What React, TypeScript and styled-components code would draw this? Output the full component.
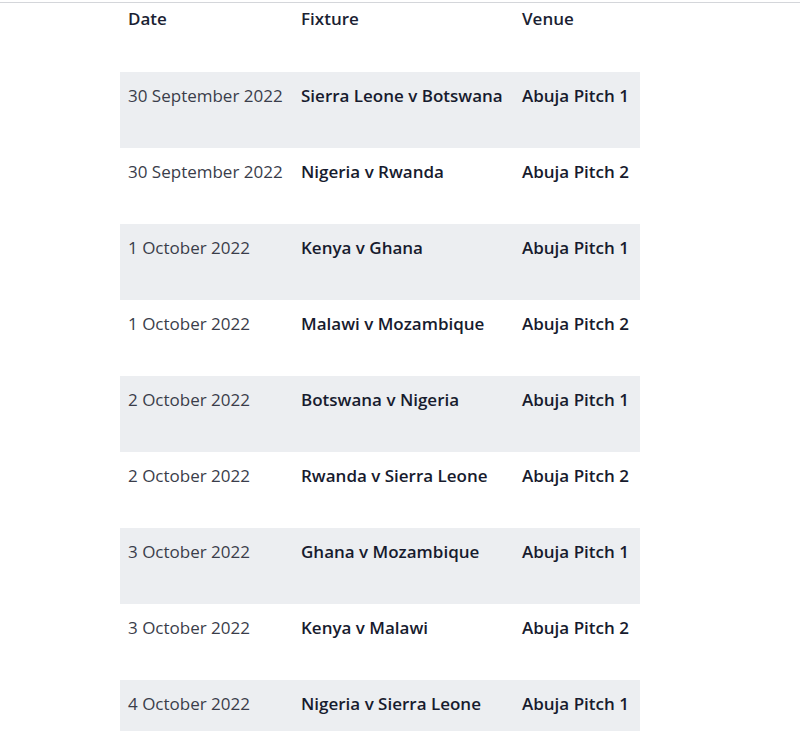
import React, { FC } from 'react'
import styled, { createGlobalStyle } from 'styled-components'

const fixtures = [
  { date: '30 September 2022', fixture: 'Sierra Leone v Botswana', venue: 'Abuja Pitch 1' },
  { date: '30 September 2022', fixture: 'Nigeria v Rwanda', venue: 'Abuja Pitch 2' },
  { date: '1 October 2022', fixture: 'Kenya v Ghana', venue: 'Abuja Pitch 1' },
  { date: '1 October 2022', fixture: 'Malawi v Mozambique', venue: 'Abuja Pitch 2' },
  { date: '2 October 2022', fixture: 'Botswana v Nigeria', venue: 'Abuja Pitch 1' },
  { date: '2 October 2022', fixture: 'Rwanda v Sierra Leone', venue: 'Abuja Pitch 2' },
  { date: '3 October 2022', fixture: 'Ghana v Mozambique', venue: 'Abuja Pitch 1' },
  { date: '3 October 2022', fixture: 'Kenya v Malawi', venue: 'Abuja Pitch 2' },
  { date: '4 October 2022', fixture: 'Nigeria v Sierra Leone', venue: 'Abuja Pitch 1' },
]

const App: FC = () => {
  return (
    <>
      <GlobalStyle />
      <Page>
        <TopRule />
        <Table>
          <colgroup>
            <col style={{ width: 173 }} />
            <col style={{ width: 221 }} />
            <col style={{ width: 126 }} />
          </colgroup>
          <thead>
            <tr>
              <HeadCell>Date</HeadCell>
              <HeadCell>Fixture</HeadCell>
              <HeadCell>Venue</HeadCell>
            </tr>
          </thead>
          <tbody>
            {fixtures.map((f, i) => (
              <Row key={i} $shaded={i % 2 === 0}>
                <DateCell>{f.date}</DateCell>
                <BoldCell>{f.fixture}</BoldCell>
                <BoldCell>{f.venue}</BoldCell>
              </Row>
            ))}
          </tbody>
        </Table>
      </Page>
    </>
  )
}

const GlobalStyle = createGlobalStyle`
  body {
    margin: 0;
    background: #ffffff;
    font-family: "Open Sans", "Liberation Sans", sans-serif;
    color: #1b1f33;
  }
`

const Page = styled.div`
  width: 800px;
  height: 731px;
  overflow: hidden;
  padding-top: 2px;
`

const TopRule = styled.div`
  height: 1px;
  background: #d4d6da;
`

const Table = styled.table`
  margin-left: 120px;
  width: 520px;
  border-collapse: collapse;
  border-spacing: 0;
  table-layout: fixed;
`

const HeadCell = styled.th`
  text-align: left;
  vertical-align: top;
  height: 69px;
  box-sizing: border-box;
  padding: 6px 0 0 8px;
  font-size: 17px;
  line-height: 20px;
  font-weight: 600;
  color: #1b1f33;
`

const Row = styled.tr<{ $shaded: boolean }>`
  background: ${p => (p.$shaded ? '#eceef1' : '#ffffff')};
`

const Cell = styled.td`
  vertical-align: top;
  height: 76px;
  box-sizing: border-box;
  padding: 14px 0 0 8px;
  font-size: 17px;
  line-height: 20px;
  white-space: nowrap;
`

const DateCell = styled(Cell)`
  color: #3a3d4a;
  font-weight: 400;
`

const BoldCell = styled(Cell)`
  font-weight: 600;
  color: #171b2e;
`

export default App
